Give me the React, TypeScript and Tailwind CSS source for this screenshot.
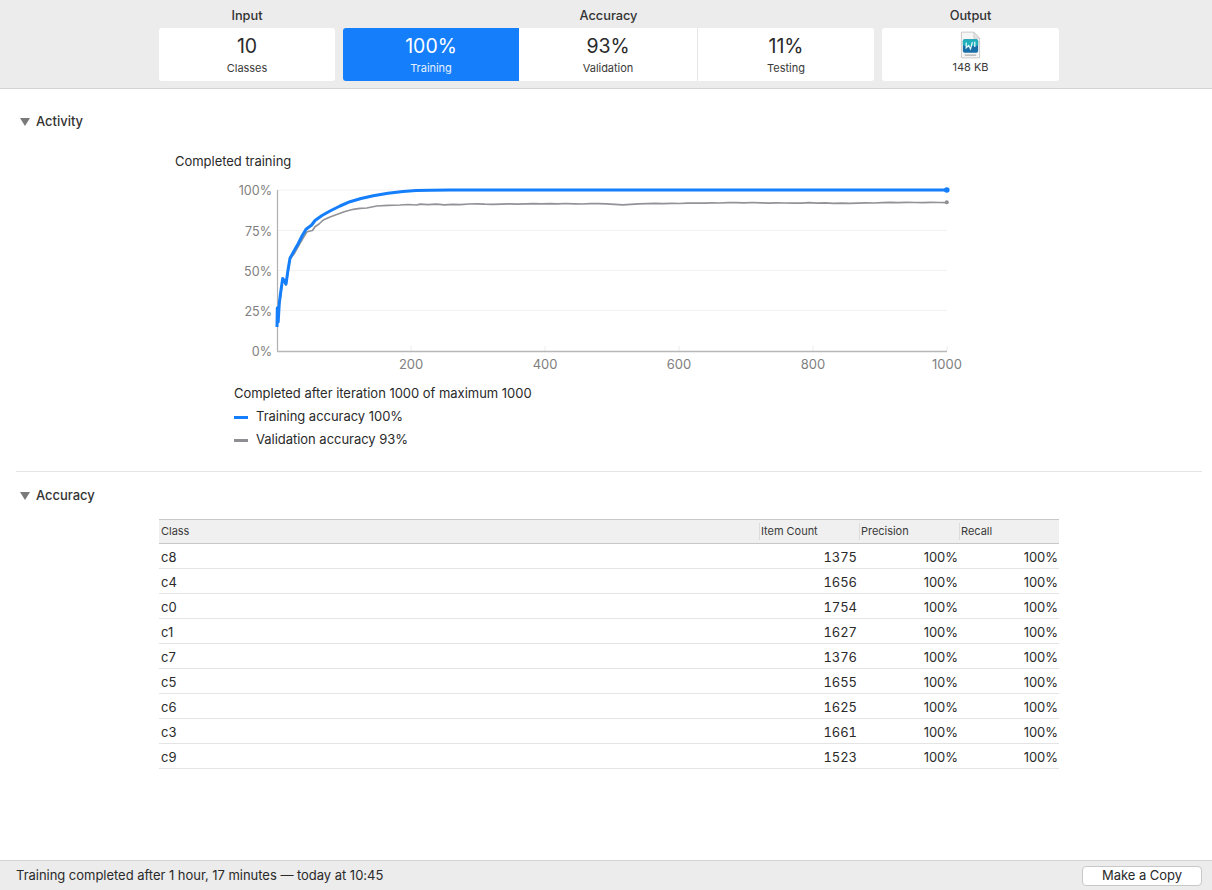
const blue: [number, number][] = [[277,327],[277.3,308],[278.2,322],[279.3,303],[281,290],[282.7,278.5],[284.5,281],[286,284],[288,270],[290,258.3],[294,251],[298,244],[302,236],[306,229.3],[311.7,225],[315,220.5],[322,215.5],[330,211],[340,206],[350,201.7],[361,198.5],[373.3,195.7],[388,193.2],[403,191.5],[416,190.6],[430,190.2],[450,190],[947,190]];
const grayHead: [number, number][] = [[277,327],[278,310],[280,300],[282.7,279],[286,285],[290,259],[294,254],[300,243.3],[306.7,232],[310,231],[312.5,230.5],[315,226.7],[319,224],[323.3,220],[330,217],[336.7,214.5],[345,211.5],[353.3,209.3],[360,208.4],[366.7,208],[376.7,206],[388,205.4],[400,205],[408,204.5],[416.7,205]];
const wiggle = [204.2,204.7,204.2,204.9,204.3,204.6,204,203.8,204.2,204.4,204.1,203.9,204.2,203.8,203.6,203.9,203.7,203.9,203.5,203.8,204,203.7,203.6,203.8,204.3,204.8,204.3,203.9,203.7,203.4,203.6,203.3,203.5,203.2,203,203.2,202.8,203,202.7,202.6,202.9,202.5,202.8,203.1,202.8,203,203.2,203.1,202.7,203.1,202.9,203.3,203.1,203.4,203.2,202.9,203,202.6,202.4,202.6,202.3,202.5,202.6,202.3,202.5,202.7];
const gray: [number, number][] = [...grayHead, ...wiggle.map((y, i): [number, number] => [420 + i * (527 / (wiggle.length - 1)), y]), [947, 202.5]];
const toPath = (p: [number, number][]) => p.map(([x, y], i) => `${i ? "L" : "M"}${x} ${y}`).join(" ");

const rows = [["c8","1375"],["c4","1656"],["c0","1754"],["c1","1627"],["c7","1376"],["c5","1655"],["c6","1625"],["c3","1661"],["c9","1523"]];

function Chart() {
  const yTicks = [["100%",190],["75%",231],["50%",271],["25%",311],["0%",351]] as const;
  const xTicks = [["200",411],["400",545],["600",679],["800",813],["1000",947]] as const;
  return (
    <svg width="1000" height="212" viewBox="0 170 1000 212" className="block">
      {[190,230.5,270.5,310.5].map((y) => <line key={y} x1="277" x2="947" y1={y} y2={y} stroke="#f2f2f2" strokeWidth="1" />)}
      {xTicks.map(([, x]) => <line key={x} x1={x} x2={x} y1="346" y2="351" stroke="#ececec" strokeWidth="1" />)}
      <line x1="277.5" x2="277.5" y1="190" y2="351.5" stroke="#b0b0b0" strokeWidth="1.2" />
      <line x1="277" x2="947" y1="351.5" y2="351.5" stroke="#b8b8b8" strokeWidth="1.3" />
      <path d={toPath(gray)} fill="none" stroke="#929297" strokeWidth="1.7" strokeLinejoin="round" />
      <circle cx="946.8" cy="202.3" r="2" fill="#8e8e93" />
      <path d={toPath(blue)} fill="none" stroke="#147efb" strokeWidth="3" strokeLinejoin="round" />
      <circle cx="946.8" cy="190" r="2.8" fill="#147efb" />
      {yTicks.map(([t, y]) => <text key={t} x="272" y={y + 4.5} textAnchor="end" fontSize="12.6" fill="#808080">{t}</text>)}
      {xTicks.map(([t, x]) => <text key={t} x={x} y="369" textAnchor="middle" fontSize="13" fill="#808080">{t}</text>)}
    </svg>
  );
}

function FileIcon() {
  return (
    <svg width="21" height="28" viewBox="0 0 22 28" className="block">
      <path d="M1.5 .5H14.5L20.5 7V27.5H1.5Z" fill="#f6f6f6" stroke="#c8c8c8" />
      <path d="M14.5 .5V7H20.5Z" fill="#e2e2e2" stroke="#c8c8c8" strokeWidth=".7" />
      <rect x="3" y="8" width="16" height="14" rx="2" fill="#1a6fa8" />
      <rect x="3" y="8" width="16" height="7" rx="2" fill="#21b0bb" />
      <path d="M6.5 11.5V17L9 14.5L11 18L13 11M15.5 10.5V16" stroke="#e6fbfb" strokeWidth="1.3" fill="none" />
      <rect x="5" y="24" width="12" height="1.2" fill="#a8a8a8" />
    </svg>
  );
}

function Triangle() {
  return <svg width="10" height="8" viewBox="0 0 10 8" className="block"><path d="M0 0H10L5 8Z" fill="#7a7a7a" /></svg>;
}

function Stat({ value, label, active }: { value: string; label: string; active?: boolean }) {
  return (
    <div className={active ? "flex flex-col items-center text-white" : "flex flex-col items-center text-[#2a2a2a]"}>
      <div className="mt-[6px] text-[19.5px] leading-[24px]">{value}</div>
      <div className={active ? "mt-[3px] text-[11px] leading-[14px] text-[#e6f1ff]" : "mt-[3px] text-[11px] leading-[14px] text-[#3a3a3a]"}>{label}</div>
    </div>
  );
}

export default function App() {
  return (
    <div className="flex h-[890px] w-[1212px] flex-col overflow-hidden bg-white text-[13px] tracking-[-0.03px] text-[#2a2a2a]" style={{ fontFamily: "Inter, 'Liberation Sans', sans-serif" }}>
      <header className="h-[89px] shrink-0 border-b border-[#d4d4d4] bg-[#ececec] pl-[159px]">
        <div className="grid grid-cols-[176px_531px_177px] gap-x-[8px]">
          <div className="flex h-[28px] items-center justify-center pt-[4px] text-[12.8px] font-medium text-[#333]">Input</div>
          <div className="flex h-[28px] items-center justify-center pt-[4px] text-[12.8px] font-medium text-[#333]">Accuracy</div>
          <div className="flex h-[28px] items-center justify-center pt-[4px] text-[12.8px] font-medium text-[#333]">Output</div>
          <div className="h-[53px] rounded-[3px] bg-white"><Stat value="10" label="Classes" /></div>
          <div className="grid h-[53px] grid-cols-[176px_179px_176px] overflow-hidden rounded-[3px] bg-white">
            <div className="bg-[#147efb]"><Stat value="100%" label="Training" active /></div>
            <div className="border-r border-[#e6e6e6]"><Stat value="93%" label="Validation" /></div>
            <div><Stat value="11%" label="Testing" /></div>
          </div>
          <div className="flex h-[53px] flex-col items-center rounded-[3px] bg-white pt-[3px]">
            <FileIcon />
            <div className="mt-[1px] text-[11px] leading-[14px] text-[#3a3a3a]">148 KB</div>
          </div>
        </div>
      </header>

      <main className="flex-1 overflow-hidden">
        <div className="ml-[16px] mr-[10px] h-[383px] border-b border-[#e4e4e4] pt-[24px]">
          <div className="flex h-[18px] items-center gap-[6px] pl-[4px] text-[13px] font-medium text-[#333]">
            <Triangle />
            <span>Activity</span>
          </div>
          <div className="ml-[159px] mt-[22px] leading-[16px]">Completed training</div>
          <div className="-ml-[16px] mt-[1px]"><Chart /></div>
          <div className="ml-[218px] mt-[3px]">
            <div className="leading-[16px]">Completed after iteration 1000 of maximum 1000</div>
            <div className="mt-[8px] flex h-[16px] items-center gap-[8px]"><span className="h-[3px] w-[14px] bg-[#147efb]" />Training accuracy 100%</div>
            <div className="mt-[7px] flex h-[16px] items-center gap-[8px]"><span className="h-[3px] w-[14px] bg-[#8e8e93]" />Validation accuracy 93%</div>
          </div>
        </div>

        <div className="mx-[16px] mt-[15px] flex h-[18px] items-center gap-[6px] pl-[4px] text-[13px] font-medium text-[#333]">
          <Triangle />
          <span>Accuracy</span>
        </div>

        <div className="ml-[159px] mt-[14px] w-[900px]">
          <div className="grid h-[25px] grid-cols-[600px_100px_100px_100px] items-center border-y border-[#c8c8c8] bg-[#f0f0f0] text-[11px] leading-[17px] text-[#3a3a3a]">
            <div className="pl-[2px]">Class</div>
            <div className="border-l border-[#dcdcdc] pl-[1px]">Item Count</div>
            <div className="border-l border-[#dcdcdc] pl-[1px]">Precision</div>
            <div className="border-l border-[#dcdcdc] pl-[1px]">Recall</div>
          </div>
          {rows.map(([name, count]) => (
            <div key={name} className="grid h-[25px] grid-cols-[600px_100px_100px_100px] items-center border-b border-[#e4e4e4] pt-[1px] text-[13px] leading-[16px]">
              <div className="pl-[2px]">{name}</div>
              <div className="pr-[2px] text-right tabular-nums">{count}</div>
              <div className="pr-[1px] text-right">100%</div>
              <div className="pr-[1px] text-right">100%</div>
            </div>
          ))}
        </div>
      </main>

      <footer className="flex h-[30px] shrink-0 items-center justify-between border-t border-[#d4d4d4] bg-[#ececec] pl-[16px] pr-[10px]">
        <span>Training completed after 1 hour, 17 minutes — today at 10:45</span>
        <button className="h-[20px] w-[120px] rounded-[4px] border border-[#c8c8c8] bg-white pb-[1px] text-[13px] leading-[16px] text-[#2a2a2a]">Make a Copy</button>
      </footer>
    </div>
  );
}
